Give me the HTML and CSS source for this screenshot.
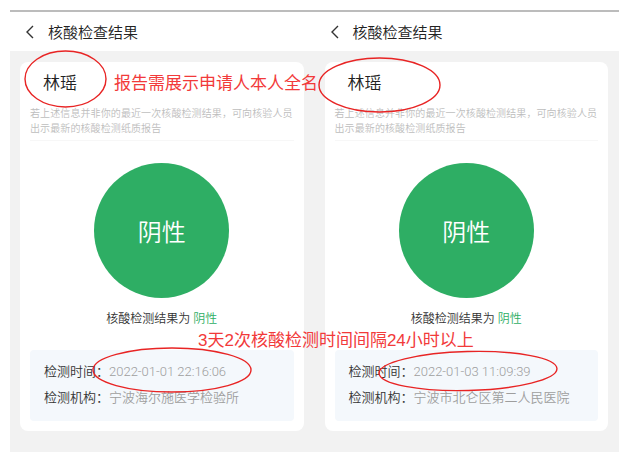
FILE: index.html
```html
<!DOCTYPE html>
<html lang="zh-CN">
<head>
    <meta charset="UTF-8">
    <meta name="viewport" content="width=device-width, initial-scale=1.0">
    <title>核酸检查结果</title>
    <link rel="stylesheet" href="styles.css">
</head>
<body>
    <div class="stage">
        <div class="topline"></div>
        <div class="phones">
            <section class="phone">
                <header class="bar">
                    <svg class="back" viewBox="0 0 10 14"><polyline points="8,1 2,7 8,13"/></svg>
                    <h1 class="title">核酸检查结果</h1>
                </header>
                <div class="body">
                    <div class="card">
                        <div class="person">
                            <div class="name">林瑶</div>
                            <p class="tip">若上述信息并非你的最近一次核酸检测结果，可向核验人员<br>出示最新的核酸检测纸质报告</p>
                        </div>
                        <div class="badge">阴性</div>
                        <p class="result">核酸检测结果为 <span>阴性</span></p>
                        <div class="info">
                            <div class="row"><span class="label">检测时间：</span><span class="value">2022-01-01 22:16:06</span></div>
                            <div class="row"><span class="label">检测机构：</span><span class="value">宁波海尔施医学检验所</span></div>
                        </div>
                    </div>
                </div>
            </section>
            <section class="phone">
                <header class="bar">
                    <svg class="back" viewBox="0 0 10 14"><polyline points="8,1 2,7 8,13"/></svg>
                    <h1 class="title">核酸检查结果</h1>
                </header>
                <div class="body">
                    <div class="card">
                        <div class="person">
                            <div class="name">林瑶</div>
                            <p class="tip">若上述信息并非你的最近一次核酸检测结果，可向核验人员<br>出示最新的核酸检测纸质报告</p>
                        </div>
                        <div class="badge">阴性</div>
                        <p class="result">核酸检测结果为 <span>阴性</span></p>
                        <div class="info">
                            <div class="row"><span class="label">检测时间：</span><span class="value">2022-01-03 11:09:39</span></div>
                            <div class="row"><span class="label">检测机构：</span><span class="value">宁波市北仑区第二人民医院</span></div>
                        </div>
                    </div>
                </div>
            </section>
        </div>

        <!-- 标注 -->
        <div class="note note-name">报告需展示申请人本人全名</div>
        <div class="note note-gap">3天2次核酸检测时间间隔24小时以上</div>
        <svg class="marks" viewBox="0 0 622 461">
            <ellipse cx="65.5" cy="79" rx="40.5" ry="28"/>
            <ellipse cx="379.5" cy="85" rx="60.5" ry="27"/>
            <ellipse cx="172" cy="370" rx="79" ry="22"/>
            <ellipse cx="468" cy="371" rx="89" ry="19.5" transform="rotate(-1.5 468 371)"/>
        </svg>
    </div>
</body>
</html>
```

FILE: styles.css
```css
* {
    box-sizing: border-box;
}
body {
    margin: 0;
    background: #fff;
    font-family: Roboto, "Noto Sans CJK SC", "Noto Sans", sans-serif;
    font-weight: 350;
    color: #222;
}
.stage {
    position: relative;
    width: 622px;
    height: 461px;
    padding: 10px 0 0 10px;
}
.topline {
    width: 609px;
    height: 2px;
    background: #bcbcbc;
}
.phones {
    display: flex;
    width: 609px;
}
.phone {
    flex: 1;
}
.bar {
    display: flex;
    align-items: center;
    height: 39px;
    padding-left: 15px;
    background: #fff;
}
.back {
    width: 10px;
    height: 14px;
    fill: none;
    stroke: #333;
    stroke-width: 1.4;
}
.title {
    margin: 0 0 0 13px;
    font-size: 15px;
    font-weight: 350;
    color: #222;
}
.body {
    background: #f2f2f2;
    padding: 11px 11px 21px 10px;
}
.card {
    background: #fff;
    border-radius: 8px;
    padding: 0 10px 10px;
}
.person {
    padding-top: 11px;
    padding-bottom: 4px;
    border-bottom: 1px solid #f7f7f7;
}
.name {
    margin-left: 13px;
    font-size: 17px;
    line-height: 20px;
    color: #222;
}
.tip {
    margin: 13px 0 0;
    font-size: 10px;
    line-height: 15px;
    letter-spacing: 0.1px;
    color: #bdbdbd;
    white-space: nowrap;
}
.badge {
    display: flex;
    align-items: center;
    justify-content: center;
    width: 135px;
    height: 135px;
    margin: 22px auto 0;
    border-radius: 50%;
    background: #2eae64;
    color: #fff;
    font-size: 24px;
}
.result {
    margin: 12px 0 0;
    text-align: center;
    font-size: 12px;
    line-height: 18px;
    color: #333;
}
.result span {
    color: #2eae64;
}
.info {
    margin-top: 22px;
    padding: 12px 14px 13px;
    background: #f4f8fc;
    border-radius: 4px;
}
.row {
    display: flex;
    font-size: 13px;
    line-height: 20px;
}
.row + .row {
    margin-top: 6px;
}
.label {
    color: #333;
}
.value {
    color: #9e9e9e;
}
.note {
    position: absolute;
    font-family: "Liberation Sans", "Noto Sans CJK SC", sans-serif;
    font-weight: 400;
    font-size: 17px;
    line-height: 20px;
    color: #f23a3a;
    white-space: nowrap;
}
.note-name {
    left: 114px;
    top: 74px;
}
.note-gap {
    left: 198px;
    top: 331px;
}
.marks {
    position: absolute;
    left: 0;
    top: 0;
    width: 622px;
    height: 461px;
    fill: none;
    stroke: #e82424;
    stroke-width: 1.4;
    pointer-events: none;
}
```
